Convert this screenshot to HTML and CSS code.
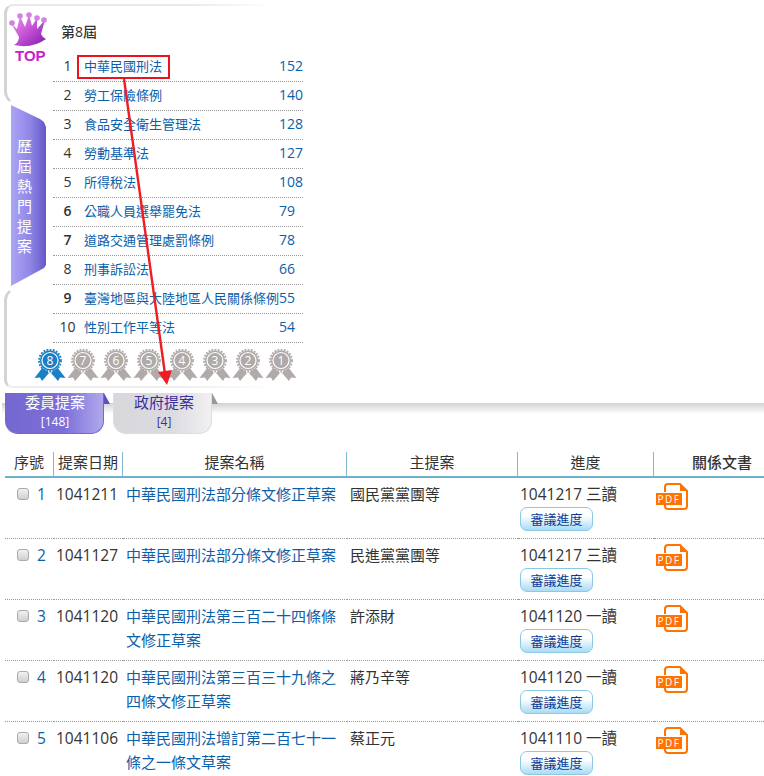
FILE: index.html
```html
<!DOCTYPE html>
<html lang="zh-Hant">
<head>
  <meta charset="UTF-8" />
  <title>中華民國刑法 - 提案</title>
  <link rel="stylesheet" href="styles.css">
</head>
<body>
  <svg class="defs" width="0" height="0">
    <defs>
      <linearGradient id="crownFill" x1="0" y1="0" x2="1" y2="1">
        <stop offset="0" stop-color="#eb9cf0"/>
        <stop offset="0.5" stop-color="#c552d6"/>
        <stop offset="1" stop-color="#7f1aa8"/>
      </linearGradient>
      <symbol id="medal" viewBox="0 0 32 32">
        <path d="M9 18 L0.5 29 L6 28.5 L8 32 L15 24 Z" fill="currentColor"/>
        <path d="M23 18 L31.5 29 L26 28.5 L24 32 L17 24 Z" fill="currentColor"/>
        <circle cx="16" cy="11.5" r="10.5" fill="currentColor" stroke="#fff" stroke-width="0.6"/>
        <circle cx="16" cy="11.5" r="11" fill="none" stroke="currentColor" stroke-width="1.8" stroke-dasharray="1.8 1.4"/>
        <circle cx="16" cy="11.5" r="8" fill="none" stroke="#fff" stroke-width="1.2"/>
      </symbol>
      <symbol id="pdf" viewBox="0 0 33 27">
        <path d="M9 9 V4 Q9 1 12 1 H24 L31 8 V23 Q31 26 28 26 H12 Q9 26 9 23 V21" fill="none" stroke="#ff7300" stroke-width="2"/>
        <path d="M24 1 L31 8 H24 Z" fill="#ff7300"/>
        <rect x="0" y="10" width="26" height="12" fill="#ff7300"/>
      </symbol>
    </defs>
  </svg>

  <div class="panel">
    <div class="side">
      <div class="side-top">
        <svg class="crown" viewBox="8 10 40 38" width="40" height="38">
          <path d="M19 37 L11 23 L17 29 L20 16 L25 27 L29 15 L32 26 L37 18 L37 29 L45 20 L41 34 Q42 37 46 39 Q32 49 14 45 Q19 42 19 37 Z" fill="url(#crownFill)"/>
          <circle cx="12" cy="23" r="2.8" fill="#d580e2"/>
          <circle cx="20" cy="16" r="2.8" fill="#d580e2"/>
          <circle cx="29" cy="15" r="2.8" fill="#d580e2"/>
          <circle cx="37" cy="18" r="2.8" fill="#d580e2"/>
          <circle cx="44" cy="20" r="2.8" fill="#d580e2"/>
        </svg>
        <div class="top-label">TOP</div>
      </div>
      <div class="ribbon"><span>歷屆熱門提案</span></div>
      <div class="side-bottom"></div>
    </div>

    <div class="main">
      <div class="term">第8屆</div>
      <ul class="rank">
        <li><span class="no">1</span><a href="#">中華民國刑法</a><span class="count">152</span></li>
        <li><span class="no">2</span><a href="#">勞工保險條例</a><span class="count">140</span></li>
        <li><span class="no">3</span><a href="#">食品安全衛生管理法</a><span class="count">128</span></li>
        <li><span class="no">4</span><a href="#">勞動基準法</a><span class="count">127</span></li>
        <li><span class="no">5</span><a href="#">所得稅法</a><span class="count">108</span></li>
        <li><span class="no strong">6</span><a href="#">公職人員選舉罷免法</a><span class="count">79</span></li>
        <li><span class="no strong">7</span><a href="#">道路交通管理處罰條例</a><span class="count">78</span></li>
        <li><span class="no">8</span><a href="#">刑事訴訟法</a><span class="count">66</span></li>
        <li><span class="no strong">9</span><a href="#">臺灣地區與大陸地區人民關係條例</a><span class="count">55</span></li>
        <li><span class="no">10</span><a href="#">性別工作平等法</a><span class="count">54</span></li>
      </ul>
      <div class="medals">
        <svg class="medal on" viewBox="0 0 32 32"><use href="#medal"/><text x="16" y="16" text-anchor="middle">8</text></svg>
        <svg class="medal" viewBox="0 0 32 32"><use href="#medal"/><text x="16" y="16" text-anchor="middle">7</text></svg>
        <svg class="medal" viewBox="0 0 32 32"><use href="#medal"/><text x="16" y="16" text-anchor="middle">6</text></svg>
        <svg class="medal" viewBox="0 0 32 32"><use href="#medal"/><text x="16" y="16" text-anchor="middle">5</text></svg>
        <svg class="medal" viewBox="0 0 32 32"><use href="#medal"/><text x="16" y="16" text-anchor="middle">4</text></svg>
        <svg class="medal" viewBox="0 0 32 32"><use href="#medal"/><text x="16" y="16" text-anchor="middle">3</text></svg>
        <svg class="medal" viewBox="0 0 32 32"><use href="#medal"/><text x="16" y="16" text-anchor="middle">2</text></svg>
        <svg class="medal" viewBox="0 0 32 32"><use href="#medal"/><text x="16" y="16" text-anchor="middle">1</text></svg>
      </div>
    </div>
  </div>

  <div class="tabs">
    <a class="tab active" href="#">委員提案<small>[148]</small></a>
    <span class="fold active"></span>
    <a class="tab" href="#">政府提案<small>[4]</small></a>
    <span class="fold"></span>
  </div>

  <table class="bills">
    <colgroup>
      <col class="c-no"><col class="c-date"><col class="c-name"><col class="c-who"><col class="c-prog"><col class="c-doc">
    </colgroup>
    <thead>
      <tr>
        <th>序號</th><th>提案日期</th><th>提案名稱</th><th>主提案</th><th>進度</th><th class="docs">關係文書</th>
      </tr>
    </thead>
    <tbody>
      <tr>
        <td class="no-cell"><input type="checkbox"><a href="#">1</a></td>
        <td>1041211</td>
        <td class="name"><a href="#">中華民國刑法部分條文修正草案</a></td>
        <td>國民黨黨團等</td>
        <td>1041217 三讀<a class="progress" href="#">審議進度</a></td>
        <td><svg class="pdf" width="33" height="27"><use href="#pdf"/><text x="13" y="20" text-anchor="middle">PDF</text></svg></td>
      </tr>
      <tr>
        <td class="no-cell"><input type="checkbox"><a href="#">2</a></td>
        <td>1041127</td>
        <td class="name"><a href="#">中華民國刑法部分條文修正草案</a></td>
        <td>民進黨黨團等</td>
        <td>1041217 三讀<a class="progress" href="#">審議進度</a></td>
        <td><svg class="pdf" width="33" height="27"><use href="#pdf"/><text x="13" y="20" text-anchor="middle">PDF</text></svg></td>
      </tr>
      <tr>
        <td class="no-cell"><input type="checkbox"><a href="#">3</a></td>
        <td>1041120</td>
        <td class="name"><a href="#">中華民國刑法第三百二十四條條文修正草案</a></td>
        <td>許添財</td>
        <td>1041120 一讀<a class="progress" href="#">審議進度</a></td>
        <td><svg class="pdf" width="33" height="27"><use href="#pdf"/><text x="13" y="20" text-anchor="middle">PDF</text></svg></td>
      </tr>
      <tr>
        <td class="no-cell"><input type="checkbox"><a href="#">4</a></td>
        <td>1041120</td>
        <td class="name"><a href="#">中華民國刑法第三百三十九條之四條文修正草案</a></td>
        <td>蔣乃辛等</td>
        <td>1041120 一讀<a class="progress" href="#">審議進度</a></td>
        <td><svg class="pdf" width="33" height="27"><use href="#pdf"/><text x="13" y="20" text-anchor="middle">PDF</text></svg></td>
      </tr>
      <tr>
        <td class="no-cell"><input type="checkbox"><a href="#">5</a></td>
        <td>1041106</td>
        <td class="name"><a href="#">中華民國刑法增訂第二百七十一條之一條文草案</a></td>
        <td>蔡正元</td>
        <td>1041110 一讀<a class="progress" href="#">審議進度</a></td>
        <td><svg class="pdf" width="33" height="27"><use href="#pdf"/><text x="13" y="20" text-anchor="middle">PDF</text></svg></td>
      </tr>
    </tbody>
  </table>

  <svg class="annotation" width="764" height="776">
    <rect x="78" y="56" width="91" height="22" fill="none" stroke="#e8141f" stroke-width="2"/>
    <line x1="124" y1="79" x2="165" y2="374" stroke="#ee1c25" stroke-width="2.4"/>
    <polygon points="158,372 172,370 167,385" fill="#ee1c25"/>
  </svg>
</body>
</html>
```

FILE: styles.css
```css
html, body {
  height: 776px;
  overflow: hidden;
}

body {
  margin: 0;
  position: relative;
  background: #fff;
  color: #333;
  font-family: "Open Sans", "Noto Sans CJK TC", sans-serif;
  font-size: 14px;
}

a {
  color: #0b60aa;
  text-decoration: none;
}

.defs {
  display: block;
  height: 0;
}

/* top panel */
.panel {
  display: flex;
  width: 299px;
  height: 384px;
  margin: 4px 0 0 4px;
}

.side {
  display: flex;
  flex-direction: column;
  width: 49px;
  flex: none;
}

.side-top {
  box-sizing: border-box;
  height: 101px;
  border-left: 3px solid #d4d4d4;
  border-top: 2px solid #e8e8e8;
  border-bottom: 2px solid transparent;
  border-radius: 9px 0 0 14px;
}

.crown {
  display: block;
  margin: 4px 0 0 1px;
}

.top-label {
  margin: -1px 0 0 8px;
  color: #c81ecc;
  font-family: "Liberation Sans", sans-serif;
  font-size: 15px;
  font-weight: bold;
  line-height: 17px;
}

.ribbon {
  box-sizing: border-box;
  width: 35px;
  height: 182px;
  margin-left: 7px;
  padding: 31px 0 0 6px;
  color: #fff;
  font-family: "Noto Sans CJK TC", sans-serif;
  font-size: 15px;
  line-height: 20px;
  background: linear-gradient(to right, #aca4f6, #8f86e6 55%, #6558c6);
  clip-path: polygon(0 0, 29px 14px, 33px 17px, 35px 22px, 35px 160px, 33px 163px, 0 181px);
}

.ribbon span {
  display: block;
  width: 15px;
}

.side-bottom {
  flex: 1;
  border-left: 3px solid #d4d4d4;
  border-top: 2px solid transparent;
  border-bottom: 2px solid #eee;
  border-radius: 14px 0 0 8px;
}

.main {
  width: 250px;
  flex: none;
  background:
    linear-gradient(to right, #e8e8e8 60%, #fff) no-repeat 0 0 / 220px 2px,
    linear-gradient(to right, #eee 60%, #fff) no-repeat 0 100% / 220px 2px;
}

.term {
  box-sizing: border-box;
  height: 49px;
  padding: 17px 0 0 8px;
  font-size: 14px;
  font-weight: 500;
  line-height: 22px;
}

.rank {
  margin: 0;
  padding: 0;
  list-style: none;
}

.rank li {
  display: grid;
  grid-template-columns: 31px 195px 24px;
  box-sizing: border-box;
  height: 29px;
  border-bottom: 1px dotted #999;
  font-size: 14px;
  line-height: 26px;
  white-space: nowrap;
}

.rank .no {
  padding-right: 2px;
  text-align: center;
}

.rank .no.strong {
  font-weight: 600;
}

.rank a {
  font-size: 13px;
}

.rank .count {
  color: #0b60aa;
}

.medals {
  display: flex;
  gap: 1px;
  margin: 6px 0 0 -19px;
}

.medal {
  width: 32px;
  height: 32px;
  flex: none;
  color: #b0aaa8;
}

.medal.on {
  color: #1a7fc4;
}

.medal text {
  fill: #fff;
  font-size: 12px;
}

/* tabs */
.tabs {
  display: flex;
  height: 41px;
  margin-top: 5px;
  padding-left: 5px;
  background: linear-gradient(to bottom, #d2d2d2, #fff) no-repeat 2px 10px / 100% 11px;
}

.tab {
  box-sizing: border-box;
  width: 99px;
  padding-left: 3px;
  border: 1px solid #ddd;
  border-top: 0;
  border-radius: 0 0 13px 13px;
  color: #3a2fa0;
  font-family: "Noto Sans CJK TC", sans-serif;
  font-size: 15px;
  line-height: 17px;
  text-align: center;
  background: linear-gradient(to right, #d8d8dc, #dcdbdf 60%, #f2f0f2);
}

.tab.active {
  padding-left: 1px;
  border-color: #7468d0;
  color: #fff;
  background: linear-gradient(to right, #7468d0, #7c70d8 60%, #b0a8ec);
}

.tab small {
  display: block;
  font-family: "Open Sans", sans-serif;
  font-size: 12px;
  line-height: 24px;
}

.fold {
  width: 6px;
  height: 11px;
  margin-right: 3px;
  background: #999;
  clip-path: polygon(0 0, 100% 100%, 0 100%);
}

.fold.active {
  background: #5a50c0;
}

/* bills table */
.bills {
  width: 759px;
  margin: 18px 0 0 5px;
  border-collapse: separate;
  border-spacing: 0;
  table-layout: fixed;
}

.c-no { width: 49px; }
.c-date { width: 69px; }
.c-name { width: 224px; }
.c-who { width: 171px; }
.c-prog { width: 136px; }
.c-doc { width: 110px; }

.bills th {
  height: 21px;
  padding: 0 0 3px;
  border-right: 1px solid #7cbbd0;
  border-bottom: 2px solid #6cb3cb;
  font-size: 15px;
  font-weight: 400;
  line-height: 21px;
}

.bills th:last-child {
  border-right: 0;
}

.bills th.docs {
  padding-left: 26px;
  font-weight: 500;
}

.bills td {
  height: 56px;
  padding: 4px 2px 0;
  border-bottom: 1px dotted #999;
  font-size: 15.5px;
  line-height: 24px;
  vertical-align: top;
}

.bills td:nth-child(4) {
  padding-left: 3px;
  font-size: 15px;
}

.bills .no-cell {
  padding-left: 12px;
}

.bills .no-cell input {
  appearance: none;
  box-sizing: border-box;
  width: 12px;
  height: 12px;
  margin: 0 8px 0 0;
  border: 1px solid #aaa;
  border-radius: 3px;
  background: linear-gradient(to bottom, #f2f2f2, #cfcfcf);
}

.bills .name {
  padding-left: 3px;
  padding-right: 8px;
  font-size: 15px;
}

.progress {
  display: block;
  box-sizing: border-box;
  width: 73px;
  height: 24px;
  margin-top: 1px;
  border: 1px solid #8cc8e4;
  border-radius: 7px;
  color: #0a3c96;
  font-size: 13px;
  line-height: 22px;
  text-align: center;
  background: linear-gradient(to bottom, #fff 35%, #a8dcf4);
}

.pdf {
  display: block;
  margin-top: 1px;
}

.pdf text {
  fill: #fff;
  font-size: 10px;
  letter-spacing: 1.5px;
}

/* red markup drawn over the page */
.annotation {
  position: absolute;
  top: 0;
  left: 0;
  pointer-events: none;
}
```
